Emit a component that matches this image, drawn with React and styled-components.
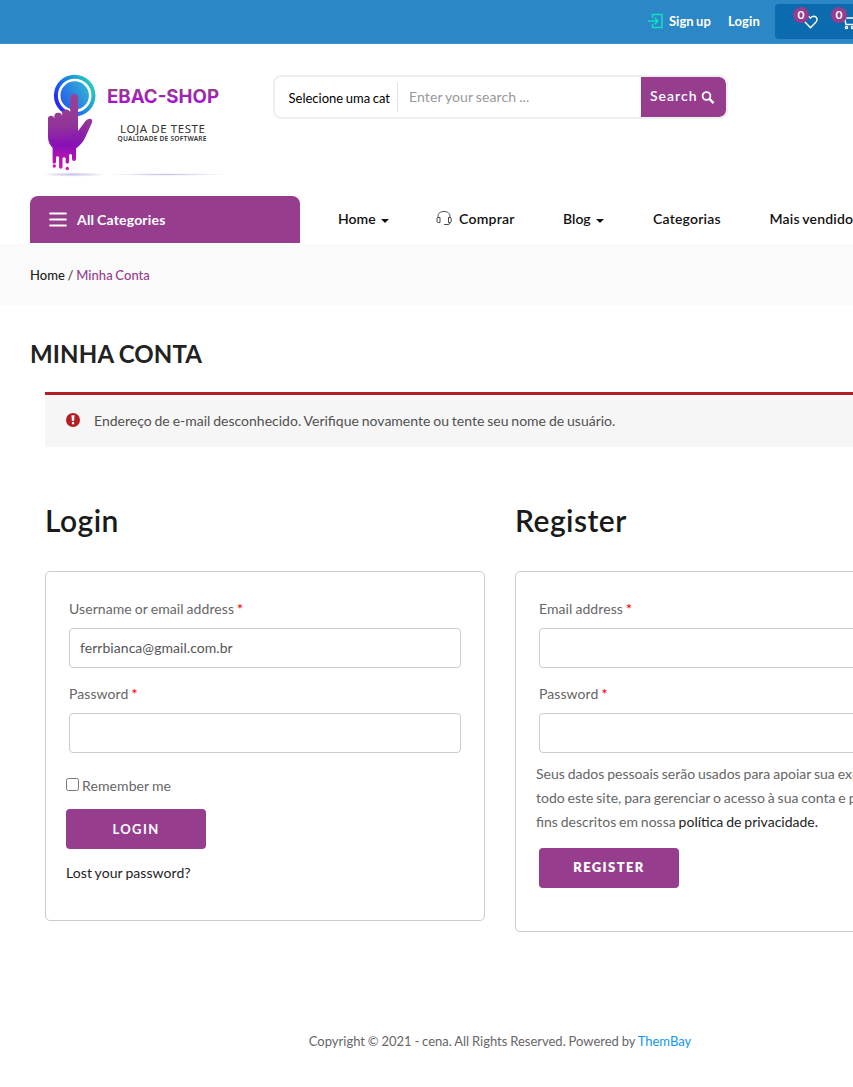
import React from "react";
import styled, { createGlobalStyle } from "styled-components";

const purple = "#963d8e";

const GlobalStyle = createGlobalStyle`
  *, *::before, *::after { box-sizing: border-box; }
  html, body { margin: 0; overflow: hidden; background: #fff; }
  body { font-family: Lato, "Liberation Sans", sans-serif; font-size: 14px; line-height: 24px; color: #666; word-spacing: -0.7px; }
  h1, h2, p { margin: 0; }
  a { color: inherit; text-decoration: none; }
  svg { display: block; flex: none; }
`;

const Viewport = styled.div`
  width: 100%;
  height: 1087px;
  overflow: hidden;
`;
const Page = styled.div`
  width: 1000px;
`;

const TopBar = styled.div`
  height: 44px;
  padding: 4px 30px 0 648px;
  display: flex;
  align-items: flex-start;
  background: #2b87c5;
  border-bottom: 1px solid #3f93ca;
`;
const TopLink = styled.a`
  display: flex;
  align-items: center;
  gap: 6px;
  height: 34px;
  width: ${(p) => p.$width}px;
  color: #fff;
  font-size: 13px;
  font-weight: 700;
  letter-spacing: ${(p) => p.$spacing || 0}px;
  white-space: nowrap;
`;
const QuickBox = styled.div`
  display: flex;
  flex: 1;
  height: 35px;
  padding: 8px 0 0 28px;
  gap: 23px;
  background: #0b6bae;
  border-radius: 4px;
`;
const QuickItem = styled.a`
  position: relative;
  height: 20px;
  display: flex;
  align-items: center;
`;
const Badge = styled.span`
  position: absolute;
  left: -10px;
  top: -5px;
  width: 16px;
  height: 16px;
  border-radius: 50%;
  background: ${purple};
  color: #fff;
  font-size: 12px;
  font-weight: 700;
  line-height: 16px;
  text-align: center;
`;

const Header = styled.header`
  height: 152px;
  padding: 16px 30px 0;
  display: flex;
  align-items: flex-start;
`;
const LogoLink = styled.a`
  width: 243px;
`;
const SearchForm = styled.div`
  margin-top: 15px;
  width: 455px;
  height: 44px;
  display: flex;
  align-items: center;
  border: 2px solid #efefef;
  border-radius: 8px;
  overflow: hidden;
`;
const CategoryPick = styled.div`
  width: 123px;
  height: 30px;
  padding-left: 13.5px;
  border-right: 1px solid #e5e5e5;
  color: #000;
  font-size: 13px;
  line-height: 32px;
  white-space: nowrap;
`;
const SearchHint = styled.div`
  flex: 1;
  padding-left: 11px;
  color: #999;
  font-size: 14px;
  letter-spacing: 0.1px;
`;
const SearchButton = styled.div`
  width: 85px;
  height: 40px;
  display: flex;
  align-items: center;
  gap: 3px;
  padding-left: 9px;
  background: ${purple};
  color: #fff;
  font-size: 14px;
  font-weight: 600;
  letter-spacing: 1px;
  line-height: 38px;
  border-radius: 0 7px 7px 0;
`;
const SearchLabel = styled.span`
  margin-bottom: 2px;
`;

const NavRow = styled.nav`
  height: 48px;
  padding-left: 30px;
  display: flex;
`;
const AllCategories = styled.div`
  width: 270px;
  height: 47px;
  padding-left: 19px;
  display: flex;
  align-items: center;
  gap: 10px;
  background: ${purple};
  color: #fff;
  font-weight: 700;
  letter-spacing: 0.18px;
  border-radius: 8px 8px 0 0;
`;
const NavItem = styled.a`
  margin-left: ${(p) => p.$gap}px;
  width: ${(p) => p.$width}px;
  height: 46px;
  display: flex;
  align-items: center;
  gap: ${(p) => p.$inner || 5}px;
  flex: none;
  color: #111;
  font-weight: 600;
  letter-spacing: ${(p) => p.$spacing || 0}px;
  white-space: nowrap;
`;
const Caret = styled.span`
  margin-top: 4px;
  border: 4px solid transparent;
  border-top-color: #111;
  border-bottom: 0;
`;

const Breadcrumb = styled.div`
  height: 61px;
  padding-left: 30px;
  background: #fafafa;
  color: #444;
  font-size: 13px;
  font-weight: 500;
  line-height: 62px;
  letter-spacing: 0.05px;
`;
const Crumb = styled.a`
  color: ${(p) => (p.$current ? purple : "#222")};
`;

const Main = styled.main`
  padding: 31px 30px 0;
`;
const PageTitle = styled.h1`
  color: #222;
  font-size: 24px;
  font-weight: 700;
  line-height: 36px;
  letter-spacing: 0.15px;
`;
const Notice = styled.div`
  margin: 20px 0 0 15px;
  height: 55px;
  padding-left: 21px;
  display: flex;
  align-items: center;
  gap: 14px;
  background: #f6f6f6;
  border-top: 3px solid #b81c23;
  color: #515151;

  svg { margin-bottom: 2px; }
`;
const Columns = styled.div`
  margin: 55px 0 0 15px;
  display: grid;
  grid-template-columns: 440px 440px;
  gap: 30px;
  align-items: start;
`;
const ColumnTitle = styled.h2`
  margin-bottom: 33px;
  color: #1a1a1a;
  font-size: 30px;
  font-weight: 600;
  line-height: 36px;
  letter-spacing: 0.45px;
`;
const Card = styled.div`
  height: ${(p) => p.$height}px;
  padding: 25px 20px 0;
  border: 1px solid #ccc;
  border-radius: 5px;
`;
const Field = styled.div`
  margin: 0 3px ${(p) => p.$after}px;
`;
const Label = styled.label`
  display: block;
  margin-bottom: 7px;
  line-height: 24px;
  letter-spacing: 0.08px;
`;
const Required = styled.span`
  color: #f00;
  font-weight: 600;
`;
const Input = styled.div`
  height: 40px;
  padding-left: 10px;
  border: 1px solid #ccc;
  border-radius: 4px;
  line-height: 38px;
  letter-spacing: 0.05px;
  color: #555;
`;
const Remember = styled.label`
  display: flex;
  align-items: center;
  gap: 3px;
  height: 24px;
  margin-top: 21px;
  letter-spacing: 0.1px;
`;
const Checkbox = styled.span`
  width: 13px;
  height: 13px;
  margin-bottom: 3px;
  border: 1px solid #767676;
  border-radius: 2.5px;
`;
const SubmitButton = styled.div`
  width: 140px;
  height: 40px;
  margin: ${(p) => p.$margin};
  background: ${purple};
  border-radius: 4px;
  color: #fff;
  font-size: 13px;
  font-weight: ${(p) => p.$weight || 700};
  line-height: ${(p) => p.$line || 40}px;
  letter-spacing: 1.4px;
  text-align: center;
`;
const DarkLink = styled.a`
  color: #222;
  letter-spacing: ${(p) => p.$spacing || 0}px;
`;
const Privacy = styled.p`
  line-height: 24px;
  white-space: nowrap;
`;
const Footer = styled.footer`
  margin-top: 97px;
  text-align: center;
  font-size: 13px;
  line-height: 24px;
  word-spacing: -0.5px;
`;
const FooterLink = styled.a`
  color: #0f96f3;
`;

const SignUpIcon = () => (
  <svg width="15" height="16" viewBox="0 0 15 16" fill="none" stroke="#11dfc8" strokeWidth="1.5">
    <path d="M4.5 5V1.5H14v13H4.5V11M0 8h9.5M6.7 4.8 9.8 8l-3.1 3.2" />
  </svg>
);
const HeartIcon = () => (
  <svg width="15" height="14" viewBox="0 0 15 14" fill="none" stroke="#fff" strokeWidth="1.4" strokeLinejoin="round">
    <path d="M7.5 12.7 2 7C.4 5.2.8 2.8 2.3 1.8 4.1.6 6.3 1.4 7.5 3.2 8.7 1.4 10.9.6 12.7 1.8c1.5 1 1.9 3.4.3 5.2z" />
  </svg>
);
const CartIcon = () => (
  <svg width="16" height="15" viewBox="0 0 16 15" fill="none" stroke="#fff" strokeWidth="1.4">
    <path d="M0 1h3l2 8.5h8L15 3H4" />
    <circle cx="5.5" cy="12.5" r="1.1" />
    <circle cx="11.5" cy="12.5" r="1.1" />
  </svg>
);
const SearchIcon = () => (
  <svg width="14" height="14" viewBox="0 0 14 14" fill="none" stroke="#fff">
    <circle cx="5.5" cy="6" r="3.9" strokeWidth="1.8" />
    <path d="m8.4 8.9 4.2 4.2" strokeWidth="2.3" />
  </svg>
);
const MenuIcon = () => (
  <svg width="18" height="18" viewBox="0 0 18 18" stroke="#fff" strokeWidth="2.2" strokeLinecap="round">
    <path d="M1.2 2.5h15.6M1.2 8.5h15.6M1.2 14.5h15.6" />
  </svg>
);
const HeadsetIcon = () => (
  <svg width="16" height="18" viewBox="0 0 16 18" fill="none" stroke="#333" strokeWidth="0.9">
    <path d="M2 8V6.5C2 3.200 4.500 1.500 8 1.500s6 1.700 6 5V8M4 7.500H2.500q-1.500 0-1.500 1v3q0 1 1.500 1H4zM12.500 7.500H14q1.200 0 1.200 1v3q0 1-1.200 1h-1.500zM14 12.500q0 2-2 2H8.200" />
  </svg>
);
const AlertIcon = () => (
  <svg width="14" height="14" viewBox="0 0 14 14">
    <circle cx="7" cy="7" r="7" fill="#b81c23" />
    <path d="M5.500 2.200h3L8.100 8H5.900zM5.900 9h2.200v2.300H5.900z" fill="#fff" />
  </svg>
);

const Logo = () => (
  <svg width="210" height="125" viewBox="0 0 210 125">
    <defs>
      <linearGradient id="ring" x1="0" y1="0.75" x2="1" y2="0.2">
        <stop offset="0" stopColor="#2c14f5" />
        <stop offset="0.5" stopColor="#1688e4" />
        <stop offset="1" stopColor="#30d3b0" />
      </linearGradient>
      <linearGradient id="disc" x1="0" y1="0.8" x2="1" y2="0.2">
        <stop offset="0" stopColor="#2457ec" />
        <stop offset="1" stopColor="#32b9d3" />
      </linearGradient>
      <linearGradient id="hand" x1="0" y1="34" x2="0" y2="110" gradientUnits="userSpaceOnUse">
        <stop offset="0" stopColor="#994296" />
        <stop offset="0.4" stopColor="#913596" />
        <stop offset="0.68" stopColor="#8a12b8" />
        <stop offset="1" stopColor="#da0fae" />
      </linearGradient>
      <linearGradient id="word" x1="0" y1="0" x2="0" y2="1">
        <stop offset="0.2" stopColor="#963d8e" />
        <stop offset="0.8" stopColor="#a510d5" />
      </linearGradient>
      <radialGradient id="shade">
        <stop offset="0" stopColor="#c5c1e4" />
        <stop offset="1" stopColor="#fff" />
      </radialGradient>
    </defs>
    <ellipse cx="43" cy="114.500" rx="32" ry="2.300" fill="url(#shade)" />
    <ellipse cx="137" cy="114.500" rx="60" ry="1.300" fill="url(#shade)" />
    <circle cx="44.700" cy="35.500" r="20.800" fill="url(#ring)" />
    <circle cx="44.700" cy="35.500" r="15.500" fill="url(#disc)" stroke="#fff" strokeWidth="2.600" />
    <path
      d="M40.200 38a3.900 3.900 0 0 1 7.800 0V71L55.500 61Q58 58.500 60.500 58.800 63 59.500 61.800 63L55.500 77Q53 83 46 88.500V99a2 2 0 0 1-4 0V95Q40.500 93 39 95V102a1.700 1.700 0 0 1-3.400 0V98Q34 96.500 32.500 98V107a1.700 1.700 0 0 1-3.400 0V97Q27.500 95.500 26 97V102a1.700 1.700 0 0 1-3.400 0V88Q18 83 18 77V59.500a3 3 0 0 1 6.300-1V57a3.800 3.800 0 0 1 7.800-.5V54a4 4 0 0 1 8.100-1z"
      fill="url(#hand)"
    />
    <path d="M18 79q20 4 29-9 2-4 1-15v16l9-9q-3 22-20 26-14 1-19-9z" fill="#7808b8" opacity="0.13" />
    <circle cx="24.300" cy="106" r="1.700" fill="#dc12b0" />
    <circle cx="37.300" cy="108.500" r="1.700" fill="#dc12b0" />
    <text x="77" y="43" textLength="112" lengthAdjust="spacingAndGlyphs" fontFamily="Inter, sans-serif" fontSize="19" fontWeight="700" wordSpacing="0" fill="url(#word)">EBAC-SHOP</text>
    <text x="90" y="73" textLength="85" fontFamily="'Noto Sans', sans-serif" fontSize="11.500" wordSpacing="0" fill="#333">LOJA DE TESTE</text>
    <text x="87.500" y="81" textLength="89" fontFamily="'Noto Sans', sans-serif" fontSize="6.600" fontWeight="600" wordSpacing="0" fill="#333">QUALIDADE DE SOFTWARE</text>
  </svg>
);

const TextField = ({ label, value, after }) => (
  <Field $after={after}>
    <Label>{label} <Required>*</Required></Label>
    <Input>{value}</Input>
  </Field>
);

export default function App() {
  return (
    <Viewport>
      <GlobalStyle />
      <Page>
        <TopBar>
          <TopLink $width={80}><SignUpIcon />Sign up</TopLink>
          <TopLink $width={47} $spacing={0.1}>Login</TopLink>
          <QuickBox>
            <QuickItem><HeartIcon /><Badge>0</Badge></QuickItem>
            <QuickItem><CartIcon /><Badge>0</Badge></QuickItem>
          </QuickBox>
        </TopBar>
        <Header>
          <LogoLink><Logo /></LogoLink>
          <SearchForm>
            <CategoryPick>Selecione uma cat</CategoryPick>
            <SearchHint>Enter your search ...</SearchHint>
            <SearchButton><SearchLabel>Search</SearchLabel><SearchIcon /></SearchButton>
          </SearchForm>
        </Header>
        <NavRow>
          <AllCategories><MenuIcon />All Categories</AllCategories>
          <NavItem $gap={38} $width={52}>Home<Caret /></NavItem>
          <NavItem $gap={46} $width={79} $inner={7} $spacing={0.25}><HeadsetIcon />Comprar</NavItem>
          <NavItem $gap={48} $width={42}>Blog<Caret /></NavItem>
          <NavItem $gap={48} $width={69} $spacing={0.2}>Categorias</NavItem>
          <NavItem $gap={47.5} $width={92} $spacing={0.17}>Mais vendidos</NavItem>
        </NavRow>
        <Breadcrumb><Crumb>Home</Crumb> / <Crumb $current>Minha Conta</Crumb></Breadcrumb>
        <Main>
          <PageTitle>MINHA CONTA</PageTitle>
          <Notice><AlertIcon />Endereço de e-mail desconhecido. Verifique novamente ou tente seu nome de usuário.</Notice>
          <Columns>
            <section>
              <ColumnTitle>Login</ColumnTitle>
              <Card $height={350}>
                <TextField label="Username or email address" value="ferrbianca@gmail.com.br" after={14} />
                <TextField label="Password" after={0} />
                <Remember><Checkbox />Remember me</Remember>
                <SubmitButton $margin="11px 0 12px">LOGIN</SubmitButton>
                <DarkLink $spacing={0.07}>Lost your password?</DarkLink>
              </Card>
            </section>
            <section>
              <ColumnTitle>Register</ColumnTitle>
              <Card $height={361}>
                <TextField label="Email address" after={14} />
                <TextField label="Password" after={9} />
                <Privacy>
                  Seus dados pessoais serão usados para apoiar sua experiência em<br />
                  todo este site, para gerenciar o acesso à sua conta e para outros<br />
                  fins descritos em nossa <DarkLink>política de privacidade.</DarkLink>
                </Privacy>
                <SubmitButton $margin="14px 0 0 3px" $weight={800} $line={38}>REGISTER</SubmitButton>
              </Card>
            </section>
          </Columns>
        </Main>
        <Footer>Copyright © 2021 - cena. All Rights Reserved. Powered by <FooterLink>ThemBay</FooterLink></Footer>
      </Page>
    </Viewport>
  );
}
